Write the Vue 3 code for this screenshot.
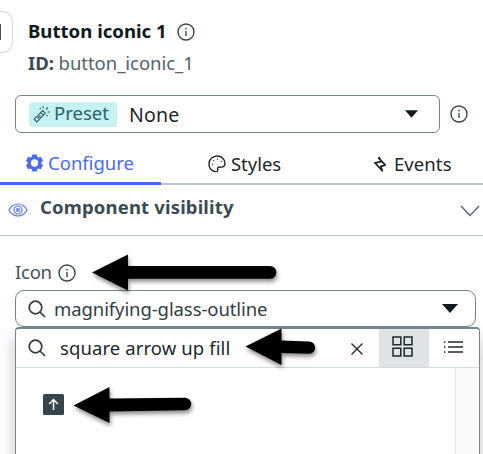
<script setup>
const tabs = [
  { id: 'configure', label: 'Configure' },
  { id: 'styles', label: 'Styles' },
  { id: 'events', label: 'Events' },
]
const active = 'configure'
</script>

<template>
  <main class="panel">
    <header class="head">
      <div class="thumb"><i></i></div>
      <div class="titles">
        <div class="title">
          <span class="name">Button iconic 1</span>
          <svg class="info" viewBox="0 0 18 18"><circle cx="9" cy="9" r="8" /><path d="M9 8v5M9 4.8v1.6" /></svg>
        </div>
        <div class="ident"><b>ID:</b> <span>button_iconic_1</span></div>
      </div>
    </header>

    <div class="preset-row">
      <div class="select preset">
        <span class="chip">
          <svg class="wand" viewBox="0 0 18 18"><path d="M1.2 14.2 9.7 5.7l2.6 2.6-8.5 8.5zM7.8 7.6l2.6 2.6M4.5 13.5l3-3M10 1.2v2M13 4.5l1.8-2M14.5 7h2.5M6.7 3l1 1M13.5 10l1 1" /></svg>
          <span class="chip-label">Preset</span>
        </span>
        <span class="none">None</span>
        <svg class="caret small" viewBox="0 0 16 9"><path d="M0 0h16L8 9z" /></svg>
      </div>
      <svg class="info" viewBox="0 0 18 18"><circle cx="9" cy="9" r="8" /><path d="M9 8v5M9 4.8v1.6" /></svg>
    </div>

    <nav class="tabs">
      <div v-for="t in tabs" :key="t.id" class="tab" :class="[t.id, { active: t.id === active }]">
        <svg v-if="t.id === 'configure'" class="gear" viewBox="0 0 18 18"><path fill-rule="evenodd" d="M6.7 0h4.6l.6 2.5 1.3.8 2.5-.8L18 6.6l-1.8 1.8v1.3l1.8 1.8-2.3 4-2.5-.8-1.3.8-.6 2.5H6.7l-.6-2.5-1.3-.8-2.5.8-2.3-4 1.8-1.8V8.4L0 6.6l2.3-4.1 2.5.8 1.3-.8zM9 5.1a3.9 3.9 0 1 0 0 7.8 3.9 3.9 0 0 0 0-7.8z" /></svg>
        <svg v-else-if="t.id === 'styles'" class="palette" viewBox="0 0 18 18"><path d="M7.2 16.6C3.8 15.8 1 12.9 1 9a8 8 0 0 1 8-8c4.7 0 8 3.3 8 7.3 0 2.4-1.6 4-3.8 3.8-1.7-.2-3.5-.3-3.7 1.1-.1.9.5 1.3.2 2.4-.3 1-1.2 1.2-2.5 1z" /><path class="dots" d="M4.2 9.5h1M5.2 5.6h1M9 4.2h1M12.8 6.3h1" /></svg>
        <svg v-else class="bolt" viewBox="0 0 12 16"><path d="M5 .8 7.2 5.600 1 6.800 8.600 15.200 6.800 10.400 11.200 9 4.200 1.600" /></svg>
        <span>{{ t.label }}</span>
      </div>
    </nav>

    <section class="visibility">
      <svg class="eye" viewBox="0 0 20 14"><path d="M1 7c2-3.8 5.3-6 9-6s7 2.2 9 6c-2 3.8-5.3 6-9 6S3 10.8 1 7z" /><circle cx="10" cy="7" r="4" /><path d="M8.8 5.8h2.4v2.4H8.8z" /></svg>
      <span class="vis-label">Component visibility</span>
      <svg class="chevron" viewBox="0 0 20 12"><path d="m1 1 9 9.5L19 1" /></svg>
    </section>

    <section class="icon-field">
      <div class="label">
        <span>Icon</span>
        <svg class="info" viewBox="0 0 18 18"><circle cx="9" cy="9" r="8" /><path d="M9 8v5M9 4.8v1.6" /></svg>
      </div>
      <div class="select value">
        <svg class="search" viewBox="0 0 18 18"><circle cx="7.5" cy="7.5" r="6.3" /><path d="m12 12 5 5" /></svg>
        <span class="value-text">magnifying-glass-outline</span>
        <svg class="caret" viewBox="0 0 16 9"><path d="M0 0h16L8 9z" /></svg>
      </div>
      <div class="dropdown">
        <div class="query">
          <svg class="search" viewBox="0 0 18 18"><circle cx="7.5" cy="7.5" r="6.3" /><path d="m12 12 5 5" /></svg>
          <span class="query-text">square arrow up fill</span>
          <svg class="clear" viewBox="0 0 12 12"><path d="m.5.5 11 11M11.5.5l-11 11" /></svg>
          <div class="mode on">
            <svg class="grid" viewBox="0 0 21 21"><path d="M1 1h7.8v7.8H1zM12.2 1H20v7.8h-7.8zM1 12.2h7.8V20H1zM12.2 12.2H20V20h-7.8z" /></svg>
          </div>
          <div class="mode">
            <svg class="list" viewBox="0 0 19 12"><path d="M4 1h15M4 6h15M4 11h15M0 1h1.5M0 6h1.5M0 11h1.5" /></svg>
          </div>
        </div>
        <div class="results">
          <div class="cells">
            <svg class="square-up" viewBox="0 0 21 21"><rect width="21" height="21" rx="1.5" /><path d="M10.5 16V6M6.2 10l4.3-4.5 4.3 4.5" /></svg>
          </div>
          <div class="track"></div>
        </div>
      </div>
    </section>

    <svg class="marks" viewBox="0 0 483 454">
      <path d="M92 272.5 128 254.5V266H270a6.3 6.3 0 0 1 0 12.8H128V290.5z" />
      <path d="M245.500 346.500 281.500 328.500V340.500L309 341.500a6 6 0 0 1 0 12.300L281.500 353V365z" />
      <path d="M73.500 405.500 109.500 387V398.500L185 397.800a6.200 6.200 0 0 1 0 12.400L109.500 411.500V423z" />
    </svg>
  </main>
</template>

<style>
body { margin: 0; background: #fff; overflow: hidden; }
</style>

<style scoped>
* { box-sizing: border-box; }
.panel {
  position: relative;
  width: 483px;
  height: 454px;
  overflow: hidden;
  background: #fff;
  color: #1b2529;
  font-family: "Noto Sans", sans-serif;
  font-size: 18.5px;
  line-height: 26px;
  white-space: nowrap;
}
svg { display: block; flex: none; fill: none; stroke: currentColor; stroke-width: 1.4; }
.head { display: flex; height: 95px; }
.thumb {
  display: flex;
  align-items: center;
  width: 13px;
  height: 42px;
  margin-top: 11px;
  border: 1.5px solid #d5dddd;
  border-left: 0;
  border-radius: 0 11px 11px 0;
}
.thumb i { width: 1px; height: 16px; background: #42545a; }
.titles { padding: 17px 0 0 14px; }
.title { display: flex; align-items: center; gap: 10px; }
.name { font-weight: 700; color: #11191c; font-size: 18.6px; padding: 1px 0 0 1px; }
.info { width: 18px; height: 18px; color: #39484e; margin-top: 2px; }
.ident { margin-top: 6px; padding-left: 1px; color: #52636a; letter-spacing: -.04px; }
.ident b { color: #3b4b52; }
.preset-row { display: flex; align-items: center; gap: 10px; padding-left: 15px; }
.preset-row .info { margin-top: -1px; }
.select { display: flex; align-items: center; height: 38px; border: 1.5px solid #75868a; border-radius: 6px; background: #fff; }
.preset { width: 425px; padding: 0 21px 0 13px; }
.chip {
  display: flex;
  align-items: center;
  gap: 3px;
  width: 88px;
  height: 25px;
  padding-left: 4px;
  border-radius: 4px;
  background: #c6f2f1;
  color: #2b6468;
}
.chip-label { margin-top: -2px; }
.wand { width: 18px; height: 18px; stroke-width: 1.2; }
.none { margin-left: 12px; padding-top: 1px; font-size: 19.5px; letter-spacing: .2px; }
.caret { width: 16px; height: 9px; margin-left: auto; fill: #11191c; stroke: none; }
.caret.small { width: 13px; height: 8px; }
.tabs { display: flex; height: 52px; border-bottom: 2px solid #bdc5cb; }
.tab { display: flex; align-items: center; gap: 5px; width: 162px; height: 52px; padding-top: 9px; }
.tab.active { padding: 10px 0 0 26px; border-bottom: 3px solid #4667ed; color: #4a6bed; }
.gear { width: 17px; height: 18px; fill: currentColor; stroke: none; }
.palette { width: 18px; height: 18px; }
.palette .dots { stroke-width: 1.3; }
.bolt { width: 12px; height: 16px; stroke-width: 1.7; }
.styles { padding-left: 47px; }
.events { padding-left: 52px; gap: 8px; }
.events span { letter-spacing: .1px; }
.visibility { display: flex; align-items: center; height: 51px; padding: 0 3px 2px 8px; border-bottom: 1.5px solid #bdc5cb; }
.eye { width: 20px; height: 14px; color: #5c78ee; margin-top: 2px; stroke-width: 1.2; }
.vis-label { margin: -4px 0 0 12px; font-weight: 700; color: #3b4b52; letter-spacing: .16px; }
.chevron { width: 20px; height: 12px; margin: 3px 0 0 auto; color: #54666c; }
.icon-field { padding: 23px 7px 0 15px; }
.label { display: flex; align-items: center; gap: 6px; height: 26px; color: #42525a; }
.label span { margin-top: -1px; letter-spacing: -.25px; }
.label .info { margin-top: 1px; }
.value { height: 37px; margin-top: 5px; padding: 0 17px 0 12px; border-radius: 9px; color: #303d43; }
.search { width: 18px; height: 18px; stroke-width: 1.7; color: #303d43; }
.value-text { margin-left: 8px; letter-spacing: -.09px; }
.dropdown {
  width: 465px;
  height: 140px;
  border: 1.5px solid #75868a;
  border-top-width: 2px;
  border-radius: 4px 4px 0 0;
  background: #fff;
  box-shadow: 0 10px 18px rgba(0, 0, 0, .23);
}
.query { display: flex; align-items: center; height: 39px; padding-left: 12px; border-bottom: 1.5px solid #d4d9da; color: #20292d; }
.query-text { margin-left: 14px; letter-spacing: .1px; }
.clear { width: 12px; height: 12px; margin: 2px 16px 0 auto; }
.mode { display: flex; align-items: center; justify-content: center; width: 50px; height: 38px; }
.mode.on { background: #dee3e5; }
.grid { width: 21px; height: 21px; margin: -3px 3px 0 0; stroke-width: 1.5; }
.list { width: 19px; height: 12px; margin: -3px 2px 0 0; stroke-width: 1.6; }
.results { display: flex; height: 99px; }
.cells { flex: 1; padding: 26px 0 0 27px; }
.track { width: 24px; border-left: 1px solid #e3e5e5; background: #fafafa; }
.square-up { width: 21px; height: 21px; color: #fff; stroke-width: 1.5; }
.square-up rect { fill: #36454b; stroke: none; }
.marks { position: absolute; inset: 0; width: 483px; height: 454px; fill: #000; stroke: none; filter: drop-shadow(1px 3px 2px rgba(0, 0, 0, .45)); }
</style>
